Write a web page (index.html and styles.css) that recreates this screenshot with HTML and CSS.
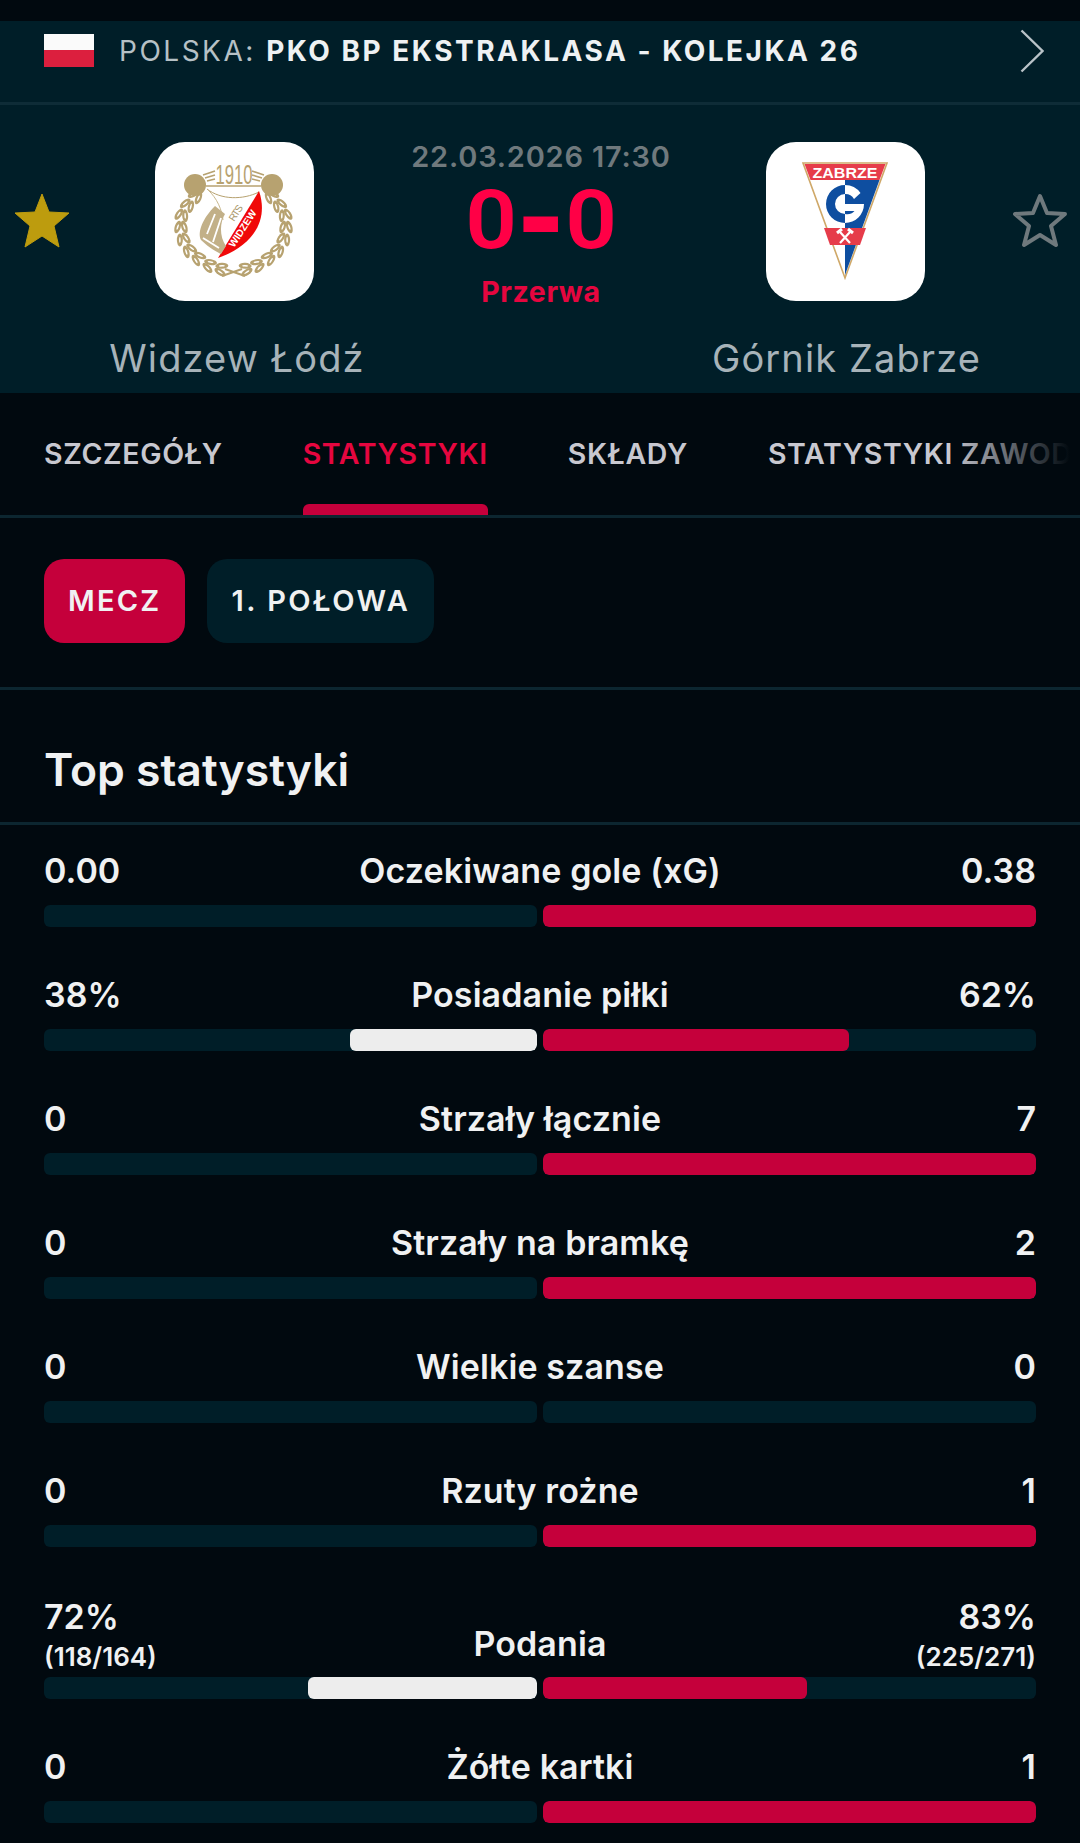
FILE: index.html
```html
<!DOCTYPE html>
<html lang="pl">
<head>
<meta charset="utf-8">
<title>Widzew Łódź - Górnik Zabrze</title>
<link rel="stylesheet" href="styles.css">
</head>
<body>
<div class="page">
  <header class="match-head">
    <div class="league">
      <span class="flag"></span>
      <span class="league-name">POLSKA: <b>PKO BP EKSTRAKLASA - KOLEJKA 26</b></span>
      <svg class="chev" viewBox="0 0 24 44"><path d="M1.500 1.500 L22.500 22 L1.500 42.500" fill="none" stroke="#b9c3c8" stroke-width="2.400"/></svg>
    </div>
    <div class="teams">
      <svg class="star" viewBox="0 0 56 56"><path d="M28 2 L35 20 L55 21 L40 34 L45 55 L28 44 L11 55 L16 34 L1 21 L21 20 Z" fill="#bd9c0e" stroke="#bd9c0e" stroke-width="1" stroke-linejoin="round"/></svg>
      <div class="team">
        <div class="logo">
          <svg viewBox="0 0 159 159" class="crest">
            <defs>
              <g id="leafpair">
                <ellipse cx="-3.300" cy="0" rx="3" ry="6.500" transform="rotate(18 -3.300 0)" fill="#b7a270"/>
                <ellipse cx="3.300" cy="0" rx="3" ry="6.500" transform="rotate(-18 3.300 0)" fill="#b7a270"/>
                <ellipse cx="-3.300" cy="0" rx=".8" ry="3" transform="rotate(18 -3.300 0)" fill="#fff"/>
                <ellipse cx="3.300" cy="0" rx=".8" ry="3" transform="rotate(-18 3.300 0)" fill="#fff"/>
              </g>
              <g id="wreath">
                <use href="#leafpair" transform="translate(41 54) rotate(42)"/>
                <use href="#leafpair" transform="translate(33 63) rotate(32)"/>
                <use href="#leafpair" transform="translate(27 73) rotate(15)"/>
                <use href="#leafpair" transform="translate(26 85) rotate(0)"/>
                <use href="#leafpair" transform="translate(28 97) rotate(-18)"/>
                <use href="#leafpair" transform="translate(34 108) rotate(-35)"/>
                <use href="#leafpair" transform="translate(43 116) rotate(-50)"/>
                <use href="#leafpair" transform="translate(54 123) rotate(-62)"/>
                <use href="#leafpair" transform="translate(66 127) rotate(-75)"/>
                <path d="M70 127 L90 134" stroke="#b7a270" stroke-width="2"/>
                <circle cx="40" cy="43" r="11" fill="#b7a270"/>
                <path d="M50 36 L60 33 M52 39 L60 37 M48 33 L60 29" stroke="#b7a270" stroke-width="1.600"/>
              </g>
            </defs>
            <use href="#wreath"/>
            <use href="#wreath" transform="translate(157 0) scale(-1 1)"/>
            <text x="79" y="42" class="c1910" textLength="37" lengthAdjust="spacingAndGlyphs">1910</text>
            <path d="M51 44 L106 44" stroke="#b7a270" stroke-width="1.500"/>
            <path d="M52 47 C66 58 88 58 104 50" fill="none" stroke="#b7a270" stroke-width="1"/>
            <path d="M104 49 C114 78 98 104 63 116 Z" fill="#f00808"/>
            <path d="M53 48 C62 56 67 68 68 78" fill="none" stroke="#c9b98f" stroke-width="1"/>
            <path d="M60 64 C48 76 42 90 46 98 C54 106 64 111 66 112 L71 104 C64 94 65 80 70 72 Z" fill="#c2b088"/>
            <path d="M60 72 L52 92 M66 76 L58 100 M48 96 L64 106" stroke="#fff" stroke-width="1.800"/>
            <text transform="translate(79 106) rotate(-57)" class="cwid" textLength="42">WIDZEW</text>
            <text transform="translate(79 80) rotate(-57)" class="crts" textLength="17">RTS</text>
          </svg>
        </div>
        <div class="team-name">Widzew Łódź</div>
      </div>
      <div class="score-box">
        <div class="date">22.03.2026 17:30</div>
        <div class="score"><span class="digit">0</span><span class="dash">-</span><span class="digit">0</span></div>
        <div class="status">Przerwa</div>
      </div>
      <div class="team">
        <div class="logo">
          <svg viewBox="0 0 159 159" class="crest">
            <path d="M37 21 L121 21 L79 136 Z" fill="#fff" stroke="#cfa868" stroke-width="1.600"/>
            <path d="M38.500 22 L119.500 22 L113.500 38 L44.500 38 Z" fill="#e63c4a"/>
            <text x="79" y="36" class="czab" textLength="65" lengthAdjust="spacingAndGlyphs">ZABRZE</text>
            <path d="M79 38 L113.500 38 L79 133 Z" fill="#0e4ea0"/>
            <path d="M58 86 L100 86 L94 103 L64 103 Z" fill="#e63c4a"/>
            <path d="M79 43 A19 19 0 0 0 79 81 L79 72 A10 10 0 0 1 79 52 Z" fill="#0e4ea0"/>
            <path d="M79 43 A19 19 0 0 1 94.500 51 L88 57 A10 10 0 0 0 79 52 Z" fill="#fff"/>
            <path d="M79 62 L98 62 A19 19 0 0 1 79 81 L79 72 A10 10 0 0 0 88.500 69 L79 69 Z" fill="#fff"/>
            <path d="M74 90 L84 101 M84 90 L74 101" stroke="#fff" stroke-width="2.200" fill="none"/>
            <path d="M71 91 L76 87 M82 87 L87 91" stroke="#fff" stroke-width="3" fill="none"/>
          </svg>
        </div>
        <div class="team-name">Górnik Zabrze</div>
      </div>
      <svg class="star" viewBox="0 0 56 56"><path d="M28 4 L35 21 L53 22 L39 34 L44 53 L28 43 L12 53 L17 34 L3 22 L21 21 Z" fill="none" stroke="#6f797d" stroke-width="4" stroke-linejoin="round"/></svg>
    </div>
  </header>

  <nav class="tabs">
    <a class="tab">SZCZEGÓŁY</a>
    <a class="tab active">STATYSTYKI</a>
    <a class="tab">SKŁADY</a>
    <a class="tab">STATYSTYKI ZAWODNIKÓW</a>
    <div class="tabs-fade"></div>
  </nav>

  <div class="pills">
    <span class="pill on">MECZ</span>
    <span class="pill">1. POŁOWA</span>
  </div>

  <h2 class="section">Top statystyki</h2>

  <section class="stats">
    <div class="row">
      <div class="labels"><span class="val">0.00</span><span class="name">Oczekiwane gole (xG)</span><span class="val">0.38</span></div>
      <div class="bars"><div class="track left"></div><div class="track right"><i class="fill red" style="width:100%"></i></div></div>
    </div>
    <div class="row">
      <div class="labels"><span class="val">38%</span><span class="name">Posiadanie piłki</span><span class="val">62%</span></div>
      <div class="bars"><div class="track left"><i class="fill white" style="width:38%"></i></div><div class="track right"><i class="fill red" style="width:62%"></i></div></div>
    </div>
    <div class="row">
      <div class="labels"><span class="val">0</span><span class="name">Strzały łącznie</span><span class="val">7</span></div>
      <div class="bars"><div class="track left"></div><div class="track right"><i class="fill red" style="width:100%"></i></div></div>
    </div>
    <div class="row">
      <div class="labels"><span class="val">0</span><span class="name">Strzały na bramkę</span><span class="val">2</span></div>
      <div class="bars"><div class="track left"></div><div class="track right"><i class="fill red" style="width:100%"></i></div></div>
    </div>
    <div class="row">
      <div class="labels"><span class="val">0</span><span class="name">Wielkie szanse</span><span class="val">0</span></div>
      <div class="bars"><div class="track left"></div><div class="track right"></div></div>
    </div>
    <div class="row">
      <div class="labels"><span class="val">0</span><span class="name">Rzuty rożne</span><span class="val">1</span></div>
      <div class="bars"><div class="track left"></div><div class="track right"><i class="fill red" style="width:100%"></i></div></div>
    </div>
    <div class="row tall">
      <div class="labels"><span class="val">72%<small>(118/164)</small></span><span class="name">Podania</span><span class="val">83%<small>(225/271)</small></span></div>
      <div class="bars"><div class="track left"><i class="fill white" style="width:46.500%"></i></div><div class="track right"><i class="fill red" style="width:53.500%"></i></div></div>
    </div>
    <div class="row">
      <div class="labels"><span class="val">0</span><span class="name">Żółte kartki</span><span class="val">1</span></div>
      <div class="bars"><div class="track left"></div><div class="track right"><i class="fill red" style="width:100%"></i></div></div>
    </div>
  </section>
</div>
</body>
</html>
```
FILE: styles.css
```css
* { box-sizing: border-box; }
html, body { margin: 0; padding: 0; background: #01090f; }
body { font-family: Inter, "Noto Sans", sans-serif; color: #f0f1f2; }
.page { width: 1080px; height: 1843px; overflow: hidden; padding-top: 21px; }

.match-head { background: #001e28; height: 372px; }
.league { height: 84px; border-bottom: 3px solid #0e2c37; display: flex; align-items: flex-start; padding: 13px 36px 0 44px; }
.flag { width: 50px; height: 33px; background: linear-gradient(#fafafa 50%, #dc1f3e 50%); flex: none; }
.league-name { margin-left: 25px; font-size: 28px; line-height: 35px; letter-spacing: 2.500px; color: #b6c1c6; white-space: nowrap; flex: 1; }
.league-name b { color: #eef1f3; font-weight: 700; }
.chev { width: 24px; height: 44px; margin-top: -5px; flex: none; }

.teams { display: grid; grid-template-columns: 56px 1fr 280px 1fr 56px; padding: 0 12px 0 14px; }
.star { width: 56px; height: 56px; margin-top: 87px; }
.team { display: flex; flex-direction: column; align-items: center; padding-top: 37px; }
.logo { width: 159px; height: 159px; background: #fff; border-radius: 30px; margin-right: 3px; }
.crest { display: block; width: 159px; height: 159px; }
.c1910 { font: 400 27px "Liberation Sans", sans-serif; fill: #b7a270; text-anchor: middle; }
.cwid { font: 700 10px "Liberation Sans", sans-serif; fill: #fff; }
.crts { font: 400 10px "Liberation Sans", sans-serif; fill: #a89668; }
.czab { font: 700 15.500px "Liberation Sans", sans-serif; fill: #fff; text-anchor: middle; }
.team-name { margin-top: 35px; font-size: 38px; line-height: 44px; color: #a7b3b9; letter-spacing: 1.100px; white-space: nowrap; }
.team:nth-child(2) .team-name { margin-left: 3px; }

.score-box { display: flex; flex-direction: column; align-items: center; padding-top: 35px; }
.date { font-size: 29px; line-height: 34px; font-weight: 600; color: #6f797d; letter-spacing: .8px; white-space: nowrap; }
.score { display: flex; align-items: center; gap: 10px; height: 72px; margin-top: 11px; font-family: Roboto, sans-serif; font-size: 81px; line-height: 72px; font-weight: 600; color: #ff0046; }
.score .digit { transform: scaleX(1.120); }
.score .dash { font-weight: 800; transform: scale(1.500, 1.600); }
.status { margin-top: 18px; font-size: 28.500px; line-height: 34px; font-weight: 700; color: #e5063f; letter-spacing: .6px; }

.tabs { position: relative; height: 125px; border-bottom: 3px solid #0c2630; display: flex; padding-left: 44px; gap: 80px; overflow: hidden; white-space: nowrap; }
.tab { font-size: 28.500px; font-weight: 600; letter-spacing: .65px; color: #c8c8d0; line-height: 122px; height: 122px; position: relative; flex: none; }
.tab.active { color: #e5063f; }
.tab.active::after { content: ""; position: absolute; left: 0; right: 0; bottom: 0; height: 11px; background: #c5003b; border-radius: 6px 6px 0 0; }
.tabs-fade { position: absolute; right: 0; top: 0; bottom: 3px; width: 130px; background: linear-gradient(90deg, rgba(1,9,15,0), #01090f 92%); }

.pills { height: 172px; border-bottom: 3px solid #0c2630; display: flex; gap: 22px; padding: 41px 0 0 44px; }
.pill { height: 84px; line-height: 84px; border-radius: 20px; background: #001e28; font-size: 29px; font-weight: 600; letter-spacing: 2.500px; padding: 0 24px; color: #f0f1f2; }
.pill.on { background: #c5003b; letter-spacing: 2.200px; }

.section { margin: 0; height: 135px; border-bottom: 3px solid #0c2630; padding: 0 44px; font-size: 44.500px; line-height: 160px; font-weight: 600; color: #f0f1f2; }

.stats { padding: 0 44px; }
.row { height: 124px; display: flex; flex-direction: column; justify-content: flex-end; padding-bottom: 21px; }
.row.tall { height: 152px; }
.stats .row:first-child { height: 123px; }
.labels { display: flex; justify-content: space-between; align-items: flex-end; position: relative; margin-bottom: 12px; min-height: 44px; }
.tall .labels { margin-bottom: 2px; }
.val { font-size: 34px; line-height: 44px; font-weight: 600; display: flex; flex-direction: column; }
.val:last-child { text-align: right; align-items: flex-end; }
.val small { font-size: 26px; line-height: 36px; font-weight: 600; }
.name { position: absolute; left: 0; right: 0; bottom: 0; text-align: center; font-size: 34px; line-height: 44px; font-weight: 600; letter-spacing: .1px; }
.tall .name { bottom: 9px; }
.bars { display: flex; gap: 6px; height: 22px; }
.track { flex: 1; background: #001e28; border-radius: 6px; display: flex; overflow: hidden; }
.track.left { justify-content: flex-end; }
.fill { display: block; height: 100%; border-radius: 6px; }
.fill.red { background: #c5003b; }
.fill.white { background: #ededed; }
```
